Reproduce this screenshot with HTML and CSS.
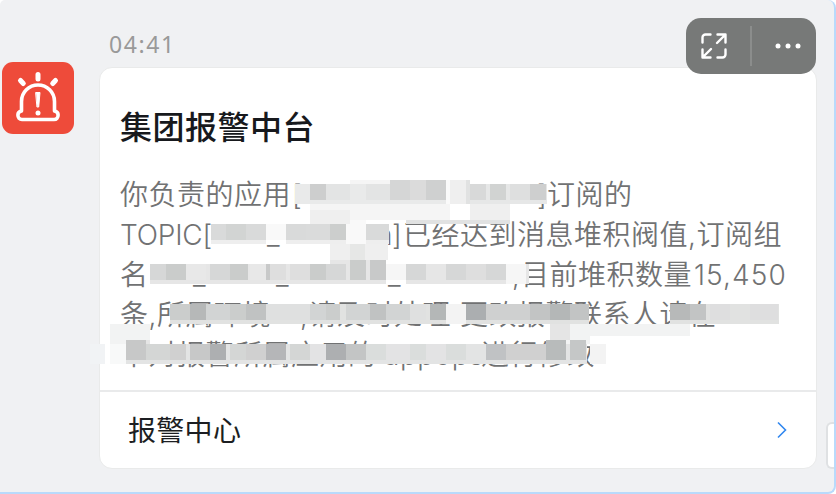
FILE: index.html
```
<!DOCTYPE html>
<html lang="zh-CN">
<head>
<meta charset="utf-8">
<title>集团报警中台</title>
<link rel="stylesheet" href="styles.css">
</head>
<body>
<main class="chat">
  <svg class="avatar" viewBox="0 0 72 72" fill="none" stroke="#fff" stroke-linecap="round" stroke-linejoin="round">
    <rect width="72" height="72" rx="11" fill="#ee4b3a" stroke="none"/>
    <path d="M36 12.500v4.500M18.500 18.500l2.800 3M53.500 18.500l-2.800 3" stroke-width="5"/>
    <path d="M19.500 49V39.500a16.500 16.500 0 0 1 33 0V49c2.500.500 3.600 2 3.600 4 0 2.700-1.600 4.500-4 4.500H20c-2.500 0-4.100-1.800-4.100-4.500 0-2 1.100-3.500 3.600-4z" stroke-width="3.600"/>
    <path d="M34 30.500h4L36.700 45h-1.400z" fill="#fff" stroke-width="1"/>
    <circle cx="36" cy="51" r="2.500" fill="#fff" stroke="none"/>
  </svg>
  <section class="message">
    <time class="time">04:41</time>
    <article class="card">
      <div class="content">
        <h1 class="title">集团报警中台</h1>
        <div class="body">
          <p class="line"><span class="w-app">你负责的应用</span><span class="w-appname">[</span><span class="w-close">]</span><span>订阅的</span></p>
          <p class="line"><span class="w-topic latin">TOPIC[</span><span class="w-t1"></span><span class="w-t2 score">_</span><span class="w-tn">n</span><span class="w-close2">]</span><span>已经达到消息堆积阀值,订阅组</span></p>
          <p class="line"><span class="w-name">名</span><span class="w-g1 score">_</span><span class="w-g2 score">_</span><span class="w-g3 score">_</span><span class="w-comma">,</span><span class="w-count">目前堆积数量</span><span class="number">15,450</span></p>
          <p class="line"><span class="w-env">条,所属环境</span><span class="w-uat"></span><span class="w-do">,请及时处理</span><span>更改报警联系人请在</span></p>
          <p class="line"><span class="w-alarm">中对报警所属应用的</span><span class="w-ops">appops</span><span>进行修改</span></p>
        </div>
      </div>
      <a class="footer"><span>报警中心</span>
        <svg class="chevron" viewBox="0 0 12 18" fill="none"><path d="M2 1.500 9.500 9 2 16.500" stroke="#3187ef" stroke-width="1.600"/></svg>
      </a>
      <svg class="mosaic" viewBox="90 170 700 200" shape-rendering="crispEdges">
        <g id="row-1">
          <path fill="#f5f5f5" d="M350 180h96v4h-96zM310 204h140v16h-140z"/>
          <path fill="#efefef" d="M390 180h56v4h-56zM450 180h20v24h-20zM470 204h40v16h-40z"/>
          <path fill="#e9eaea" d="M295 184h151v20h-151z"/>
          <path fill="#cdcece" d="M310 184h16v16h-16z"/><path fill="#e3e4e4" d="M326 184h24v16h-24zM366 184h24v16h-24z"/>
          <path fill="#d5d6d6" d="M390 180h20v20h-20z"/><path fill="#dbdbdb" d="M410 180h16v20h-16z"/>
          <path fill="#cfd0d0" d="M426 180h20v20h-20z"/><path fill="#fafafa" d="M446 180h4v24h-4z"/>
          <path fill="#e6e7e7" d="M470 184h77v20h-77z"/><path fill="#d8d9d9" d="M470 184h16v16h-16z"/>
          <path fill="#d1d3d2" d="M490 184h16v16h-16z"/><path fill="#dedfdf" d="M510 184h20v16h-20z"/>
          <path fill="#cecfcf" d="M530 184h16v16h-16z"/><path fill="#e1e2e2" d="M406 220h104v4h-104zM466 180h4v24h-4z"/>
        </g>
        <g id="row-2">
          <path fill="#eee" d="M211 224h55v20h-55zM286 224h60v20h-60zM366 224h23v20h-23z"/>
          <path fill="#d9dada" d="M211 224h15v16h-15zM246 224h20v16h-20zM286 224h20v16h-20zM366 224h23v16h-23z"/>
          <path fill="#d2d4d3" d="M226 224h20v16h-20z"/><path fill="#dadbdb" d="M306 224h24v16h-24z"/>
          <path fill="#cccecd" d="M330 224h16v16h-16z"/><path fill="#f9f9f9" d="M266 224h20v16h-20zM346 220h20v24h-20z"/>
          <path fill="#efefef" d="M330 244h58v16h-58zM310 210h40v14h-40z"/><path fill="#e6e7e6" d="M350 244h15v16h-15z"/>
        </g>
        <g id="row-3">
          <path fill="#e6e6e6" d="M150 264h236v20h-236zM406 264h123v20h-123zM330 260h56v4h-56z"/>
          <path fill="#d6d7d7" d="M150 264h16v16h-16zM210 264h20v16h-20zM326 264h20v16h-20zM406 264h20v16h-20zM446 264h20v16h-20zM486 264h20v16h-20z"/>
          <path fill="#cacccb" d="M166 264h20v16h-20zM230 264h18v16h-18zM310 264h16v16h-16zM350 260h16v20h-16z"/>
          <path fill="#e8e8e8" d="M186 264h20v16h-20zM250 264h16v16h-16z"/>
          <path fill="#c8c9c9" d="M266 264h4v16h-4zM370 260h16v20h-16z"/><path fill="#dedede" d="M270 264h16v16h-16zM290 264h20v16h-20zM466 264h20v16h-20z"/>
          <path fill="#f6f6f6" d="M386 264h20v16h-20zM506 264h20v20h-20z"/>
        </g>
        <g id="row-4">
          <path fill="#e1e2e1" d="M170 304h419v20h-419zM670 304h109v20h-109z"/>
          <path fill="#cbcdcc" d="M170 304h20v16h-20zM230 304h16v16h-16zM326 304h14v16h-14z"/>
          <path fill="#b6b8b8" d="M190 304h16v16h-16z"/><path fill="#d2d4d4" d="M206 304h24v16h-24zM310 304h16v16h-16zM346 304h24v16h-24zM386 304h24v16h-24z"/>
          <path fill="#c0c2c2" d="M246 304h20v16h-20zM370 304h16v16h-16z"/><path fill="#dfe0e0" d="M266 304h44v16h-44zM410 304h16v16h-16z"/>
          <path fill="#b4b7b7" d="M430 304h16v16h-16zM550 304h20v16h-20z"/><path fill="#f3f3f3" d="M446 304h20v20h-20z"/>
          <path fill="#abaeb0" d="M466 304h20v16h-20z"/><path fill="#cfd0d0" d="M486 304h44v16h-44z"/>
          <path fill="#c2c4c4" d="M530 304h20v16h-20zM570 304h19v16h-19zM690 304h16v16h-16z"/>
          <path fill="#b7b9b9" d="M670 304h20v16h-20z"/><path fill="#dededf" d="M710 304h20v16h-20zM750 304h28v16h-28z"/>
        </g>
        <g id="row-5">
          <path fill="#f2f3f3" d="M110 324h40v20h-40zM550 324h140v12h-140zM550 336h40v8h-40z"/>
          <path fill="#e5e5e5" d="M126 340h24v4h-24zM550 324h20v16h-20z"/>
          <path fill="#f1f3f5" d="M90 344h15v20h-15z"/><path fill="#f8f9f9" d="M110 344h16v20h-16z"/>
          <path fill="#e3e4e4" d="M126 344h461v20h-461z"/><path fill="#f3f3f3" d="M590 344h16v20h-16z"/>
          <path fill="#c7c8c8" d="M126 340h20v20h-20zM190 344h20v16h-20z"/><path fill="#d4d6d5" d="M146 344h24v16h-24zM230 344h16v16h-16zM290 344h20v16h-20z"/>
          <path fill="#d0d0d0" d="M170 344h16v16h-16zM246 344h20v16h-20zM506 344h40v16h-40z"/><path fill="#adafb1" d="M210 344h16v16h-16zM326 344h20v16h-20z"/>
          <path fill="#b5b6b8" d="M266 344h20v16h-20z"/><path fill="#c3c5c5" d="M346 344h20v16h-20z"/>
          <path fill="#dadddc" d="M366 344h20v16h-20zM410 344h16v16h-16zM446 344h20v16h-20z"/>
          <path fill="#e3e3e4" d="M310 344h16v16h-16zM386 344h24v16h-24zM426 344h20v16h-20z"/>
          <path fill="#c0c2c4" d="M486 344h20v16h-20z"/><path fill="#b8bbbb" d="M546 340h20v20h-20z"/><path fill="#c5c7c7" d="M570 340h16v20h-16z"/>
        </g>
      </svg>
    </article>
    <div class="toolbar">
      <svg class="expand" viewBox="0 0 28 28" fill="none" stroke="#fff" stroke-width="2.400" stroke-linecap="round" stroke-linejoin="round"><path d="M10.500 2.500H5.500a3 3 0 0 0-3 3v5M17.500 2.500H25.500v8M25 3 17 11M2.500 17.500V25.500h8M3 25l8-8M17.500 25.500H22.500a3 3 0 0 0 3-3v-5"/></svg>
      <i class="divider"></i>
      <svg class="more" viewBox="0 0 26 6" fill="#fff"><circle cx="3" cy="3" r="2.500"/><circle cx="13" cy="3" r="2.500"/><circle cx="23" cy="3" r="2.500"/></svg>
    </div>
  </section>
  <div class="side-box"></div>
</main>
</body>
</html>
```
FILE: styles.css
```
* { box-sizing: border-box; }
body {
  margin: 0;
  background: #fff;
  font-family: Inter, "Noto Sans CJK SC", sans-serif;
  overflow: hidden;
}
.chat {
  position: relative;
  display: flex;
  align-items: flex-start;
  width: 836px;
  height: 494px;
  padding-left: 2px;
  background: #f0f1f3;
  border-right: 2px solid #b9dafb;
  border-bottom: 2px solid #b9dafb;
  border-radius: 5px 8px 8px 0;
}
.avatar { width: 72px; height: 72px; margin-top: 62px; flex: none; }
.message { position: relative; width: 718px; margin-left: 25px; padding-top: 31px; }
.time {
  display: block;
  height: 36px;
  padding-left: 10px;
  font: 23px/26px "Noto Sans", sans-serif;
  letter-spacing: 1.6px;
  color: #999;
}
.card {
  position: relative;
  height: 402px;
  background: #fff;
  border: 1px solid #e9eaea;
  border-radius: 13px;
}
.content { height: 324px; padding: 36px 0 0 20px; border-bottom: 2px solid #e9eaeb; }
.title {
  margin: 0;
  font-size: 32px;
  line-height: 48px;
  font-weight: 500;
  letter-spacing: .5px;
  color: #17191d;
}
.body { padding-top: 23px; }
.line {
  display: flex;
  margin: 0;
  height: 40px;
  font-size: 28px;
  line-height: 40px;
  letter-spacing: .5px;
  color: #717273;
  font-weight: 350;
  white-space: nowrap;
}
.line span { flex: none; }
.w-app { width: 172px; }
.w-appname { width: 245px; }
.w-close { width: 10px; }
.w-topic { width: 91px; }
.latin { letter-spacing: -.2px; }
.w-t1 { width: 56px; }
.w-t2 { width: 109px; }
.w-tn { width: 16px; }
.w-close2 { width: 11px; }
.w-name { width: 73px; }
.w-g1 { width: 83px; }
.w-g2 { width: 112px; }
.w-g3 { width: 124px; }
.w-comma { width: 9px; }
.w-count { width: 173px; }
.number { letter-spacing: 1.100px; }
.w-env { width: 151px; }
.w-uat { width: 29px; }
.w-do { width: 160px; }
.w-alarm { width: 264px; }
.w-ops { width: 97px; }
.footer {
  display: flex;
  align-items: center;
  justify-content: space-between;
  height: 75px;
  padding: 0 28px 0 28px;
  font-size: 28px;
  letter-spacing: .3px;
  color: #1c1e22;
}
.footer span { margin-top: -2px; }
.chevron { width: 12px; height: 18px; }
.mosaic { position: absolute; left: -10px; top: 102px; width: 700px; height: 200px; }
.toolbar {
  position: absolute;
  right: 1px;
  top: 18px;
  display: flex;
  align-items: center;
  width: 130px;
  height: 56px;
  padding-left: 14px;
  border-radius: 15px;
  background: #777978;
}
.expand { width: 28px; height: 28px; }
.divider { width: 2px; height: 40px; margin-left: 22px; background: #8b8d8c; }
.more { width: 26px; height: 6px; margin-left: 23px; }
.side-box {
  position: absolute;
  right: 0;
  top: 422px;
  width: 8px;
  height: 47px;
  background: #fff;
  border: 2px solid #dfe1e3;
  border-right: 0;
  border-radius: 6px 0 0 6px;
}
```
